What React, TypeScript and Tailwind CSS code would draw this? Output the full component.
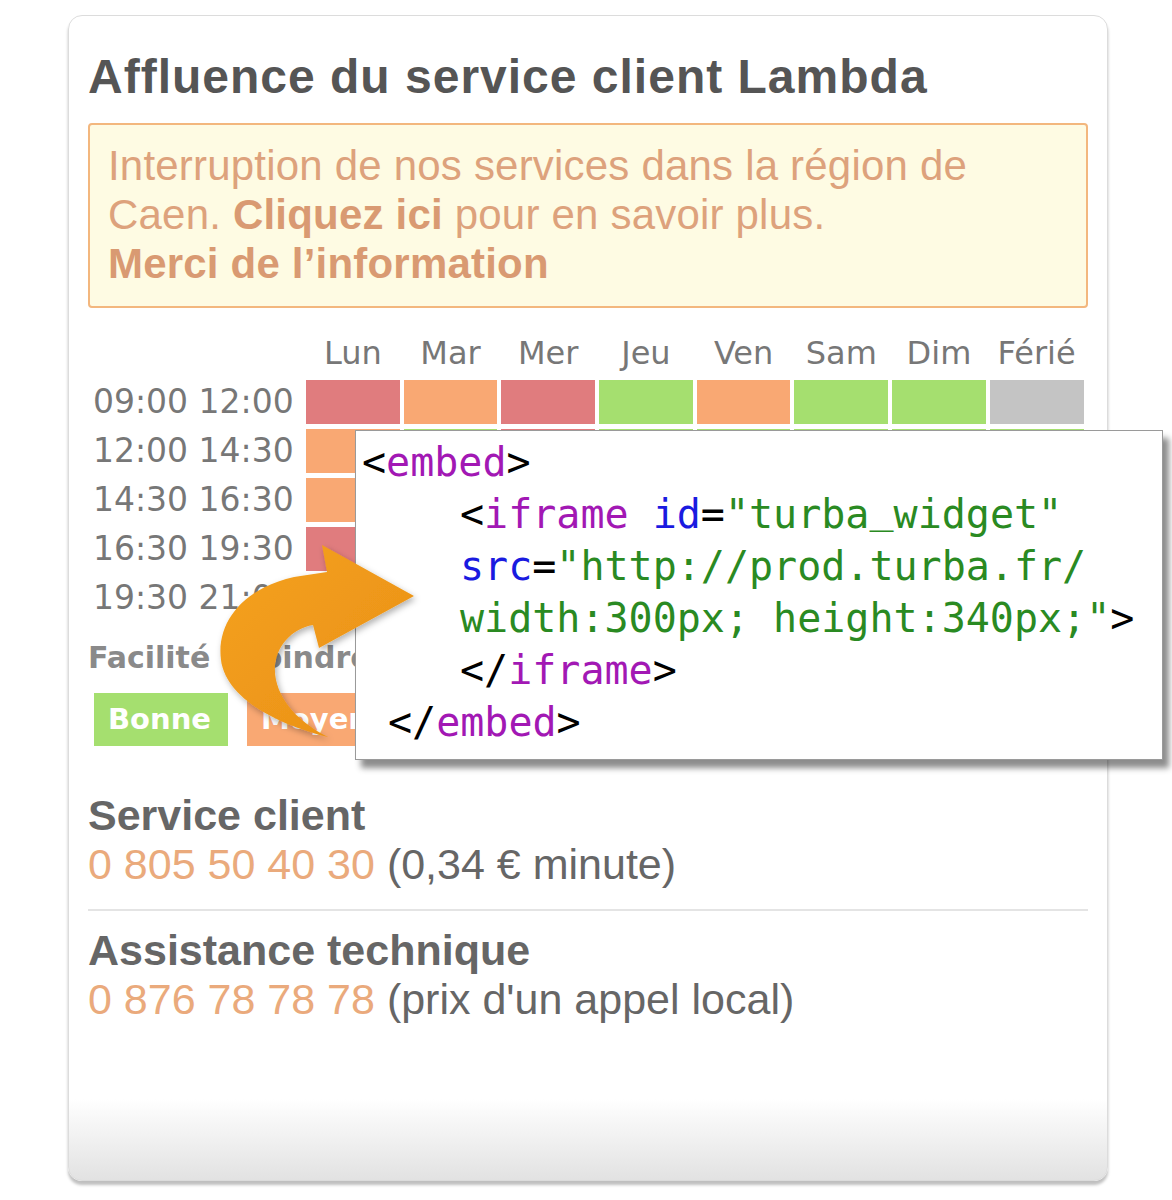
const R = 'bg-[#e07c7e]'
const O = 'bg-[#f9a873]'
const G = 'bg-[#a5df6f]'
const N = 'bg-[#c4c4c4]'

const days = ['Lun', 'Mar', 'Mer', 'Jeu', 'Ven', 'Sam', 'Dim', 'Férié']

const rows = [
  { label: '09:00 12:00', cells: [R, O, R, G, O, G, G, N] },
  { label: '12:00 14:30', cells: [O, G, R, G, G, G, G, G] },
  { label: '14:30 16:30', cells: [O, G, O, G, G, G, G, G] },
  { label: '16:30 19:30', cells: [R, O, R, G, O, G, G, G] },
  { label: '19:30 21:00', cells: [O, G, O, G, G, G, G, G] },
]

function Arrow() {
  return (
    <svg
      className="absolute left-[131px] top-[514px] w-[240px] h-[230px]"
      viewBox="200 530 240 230"
    >
      <defs>
        <linearGradient id="ar" x1="0" y1="0" x2="1" y2="1">
          <stop offset="0" stopColor="#f5a21e" />
          <stop offset="1" stopColor="#e98f16" />
        </linearGradient>
        <filter id="sh" x="-20%" y="-20%" width="140%" height="140%">
          <feDropShadow dx="2" dy="3" stdDeviation="3" floodColor="#000" floodOpacity="0.3" />
        </filter>
      </defs>
      <path
        d="M 328 737 C 276 724 226 698 221 660 C 216 622 244 588 294 577 L 327 572 L 322 545 L 414 596 L 319 648 L 313 625 C 289 629 270 652 276 680 C 282 706 303 724 328 737 Z"
        fill="url(#ar)"
        filter="url(#sh)"
      />
    </svg>
  )
}

function CodePopup() {
  return (
    <div className="absolute left-[286px] top-[414px] w-[808px] h-[330px] bg-white border border-[#9a9a9a] shadow-[6px_8px_6px_rgba(0,0,0,0.45)] font-['DejaVu_Sans_Mono',monospace] text-[40px] leading-[52px] pt-[5px]">
      <div className="pl-[6px]">
        <span className="text-black">&lt;</span>
        <span className="text-[#a218b4]">embed</span>
        <span className="text-black">&gt;</span>
      </div>
      <div className="pl-[104px]">
        <span className="text-black">&lt;</span>
        <span className="text-[#a218b4]">iframe</span>{' '}
        <span className="text-[#1a1ae0]">id</span>
        <span className="text-black">=</span>
        <span className="text-[#2a8a22]">
          "turba<span className="relative -top-[6px]">_</span>widget"
        </span>
      </div>
      <div className="pl-[104px]">
        <span className="text-[#1a1ae0]">src</span>
        <span className="text-black">=</span>
        <span className="text-[#2a8a22]">"http://prod.turba.fr/</span>
      </div>
      <div className="pl-[104px]">
        <span className="text-[#2a8a22]">width:300px; height:340px;"</span>
        <span className="text-black">&gt;</span>
      </div>
      <div className="pl-[104px]">
        <span className="text-black">&lt;/</span>
        <span className="text-[#a218b4]">iframe</span>
        <span className="text-black">&gt;</span>
      </div>
      <div className="pl-[32px]">
        <span className="text-black">&lt;/</span>
        <span className="text-[#a218b4]">embed</span>
        <span className="text-black">&gt;</span>
      </div>
    </div>
  )
}

export default function App() {
  return (
    <div className="min-h-screen bg-white pt-[15px] pl-[68px]">
      <div className="relative w-[1040px] h-[1166px] rounded-[14px] border border-[#dcdcdc] bg-gradient-to-b from-white from-[93%] to-[#e2e2e2] shadow-[0_4px_3px_rgba(0,0,0,0.25)] px-[19px] pt-[36px] font-['Liberation_Sans',Arial,sans-serif]">
        {/* titre */}
        <h1 className="text-[48px] leading-[50px] font-bold text-[#555] tracking-[1px]">
          Affluence du service client Lambda
        </h1>

        {/* alerte */}
        <div className="mt-[21px] h-[185px] rounded-[4px] border-2 border-[#f3b77e] bg-[#fefbe3] px-[18px] pt-[16px] text-[42px] leading-[49px] tracking-[0.2px] text-[#dda27c] whitespace-nowrap">
          Interruption de nos services dans la région de
          <br />
          Caen. <span className="font-bold text-[#d99a72]">Cliquez ici</span> pour en savoir plus.
          <br />
          <span className="font-bold text-[#d99a72]">Merci de l’information</span>
        </div>

        {/* tableau */}
        <div className="mt-[23px] grid grid-cols-[214px_repeat(8,93.7px)] gap-x-[4px] gap-y-[5px] font-['DejaVu_Sans',sans-serif] text-[#777]">
          <div />
          {days.map((d) => (
            <div key={d} className="text-center text-[32px] leading-[44px] h-[44px]">
              {d}
            </div>
          ))}
          {rows.map((r) => (
            <>
              <div key={r.label} className="h-[44px] leading-[44px] pl-[5px] text-[33px] whitespace-nowrap">
                {r.label}
              </div>
              {r.cells.map((c, i) => (
                <div key={r.label + i} className={`h-[44px] ${c}`} />
              ))}
            </>
          ))}
        </div>

        <div className="mt-[18px] font-['DejaVu_Sans',sans-serif] font-bold text-[30px] leading-[40px] text-[#8a8a8a]">
          Facilité à joindre
        </div>
        <div className="mt-[15px] ml-[6px] flex gap-[19px] font-['DejaVu_Sans',sans-serif] font-bold text-[29px] text-white">
          <span className="w-[134px] h-[53px] leading-[53px] pl-[14px] bg-[#a5df6f]">Bonne</span>
          <span className="w-[134px] h-[53px] leading-[53px] pl-[14px] bg-[#f9a873]">Moyenne</span>
          <span className="w-[134px] h-[53px] leading-[53px] pl-[14px] bg-[#e07c7e]">Difficile</span>
        </div>

        {/* contacts */}
        <div className="mt-[45px] text-[43px] leading-[49px]">
          <div className="font-bold text-[#666]">Service client</div>
          <div className="text-[#666]">
            <span className="text-[#eaaa7c]">0 805 50 40 30</span> (0,34 € minute)
          </div>
        </div>
        <div className="mt-[20px] border-t-2 border-[#e4e4e4]" />
        <div className="mt-[15px] text-[43px] leading-[49px]">
          <div className="font-bold text-[#666]">Assistance technique</div>
          <div className="text-[#666]">
            <span className="text-[#eaaa7c]">0 876 78 78 78</span> (prix d'un appel local)
          </div>
        </div>

        <CodePopup />
        <Arrow />
      </div>
    </div>
  )
}
